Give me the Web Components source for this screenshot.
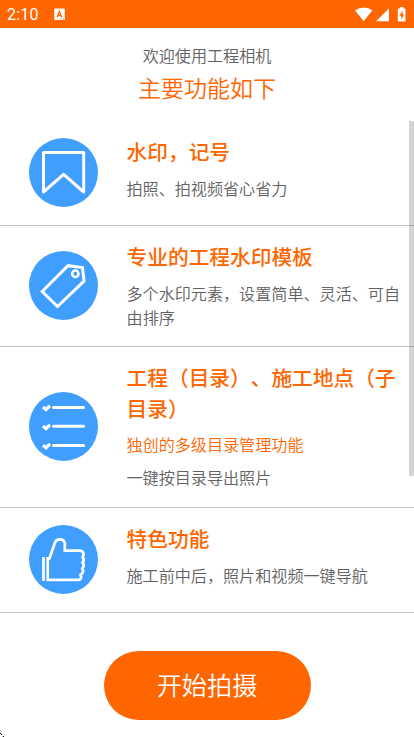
<!DOCTYPE html>
<html lang="zh-CN">
<head>
<meta charset="utf-8">
<title>工程相机</title>
<style>
html,body{margin:0;height:100%;overflow:hidden;background:#fff}
body{font-family:"Noto Sans CJK SC",sans-serif;font-weight:350;color:#606266;text-spacing-trim:space-all}
</style>
</head>
<body>
<welcome-page></welcome-page>
<script>
const define = (name, html) => {
  const template = document.createElement('template');
  template.innerHTML = html;
  customElements.define(name, class extends HTMLElement {
    constructor() {
      super();
      this.attachShadow({ mode: 'open' }).append(template.content.cloneNode(true));
    }
  });
};

define('status-bar', `
<style>
:host{display:flex;height:28px;background:#f60;color:#fff;align-items:center;box-sizing:border-box;padding:1px 8px 0 7px;font:16px/27px Roboto,sans-serif}
.time{flex:none;width:47px;letter-spacing:.25px}
svg{display:block;flex:none}
.right{margin-left:auto;display:flex;align-items:center}
</style>
<span class="time">2:10</span>
<svg width="12" height="13" viewBox="0 0 12 13"><path fill="#fff" d="M1 0.5h9q.8 0 .8.8v10q0 .8-.8.8H1q-.8 0-.8-.8v-10Q.2.5 1 .5Z"/><path d="M3.1 9.3 5.4 3.6 7.7 9.3M3.8 7.6h3.4" fill="none" stroke="#f60" stroke-width="1.4"/><path d="M6.5 11h1.2M8.8 11h1.2" stroke="#f60"/></svg>
<span class="right">
<svg width="51" height="18" viewBox="0 0 51 18"><g fill="#fff"><path d="M0 4.3Q8.7-1.5 17.5 4.3L8.7 15.3Z"/><path d="M34 2.3v13H21Z"/><path d="M44.8 1h3.6v1.6h1.4q.7 0 .7.7v11.5q0 .7-.7.7h-6.3q-.7 0-.7-.7V3.3q0-.7.7-.7h1.3Z"/></g><path fill="#f60" d="M47.5 4.5 44.4 9.7h1.8v4l3-5.4h-1.7Z"/></svg>
</span>`);

define('page-heading', `
<style>
:host{display:block;height:92.5px;box-sizing:border-box;padding-top:15px;text-align:center}
.sub{font-size:16.1px;line-height:24px}
.main{font-size:23px;line-height:34px;color:#f60;margin-top:3px}
</style>
<div class="sub"><slot name="sub"></slot></div>
<div class="main"><slot></slot></div>`);

define('round-icon', `
<style>
:host{display:block;width:69px;height:69px;border-radius:50%;background:#409eff;flex:none}
::slotted(svg){display:block;width:69px;height:69px}
</style><slot></slot>`);

define('feature-row', `
<style>
:host{display:grid;grid-template-columns:69px 276px;column-gap:28.8px;padding:15px 0 0 28.8px;border-bottom:1.15px solid #c4c4c4;box-sizing:border-box}
.icon{align-self:center;padding-bottom:16px}
.title{font-size:20.7px;line-height:31px;font-weight:500;color:#f60}
::slotted(p){margin:9px 0 0;font-size:16.1px;line-height:24px;text-indent:-.15px}
::slotted(.accent){color:#f60;margin:8.4px 0 9.6px}
</style>
<div class="icon"><slot name="icon"></slot></div>
<div><div class="title"><slot name="title"></slot></div><slot></slot></div>`);

define('start-button', `
<style>
:host{display:block;width:207px;margin:38.3px 0 0 103.5px}
button{display:block;width:100%;height:69px;padding:0 0 2px;border:0;border-radius:34.5px;background:#f60;color:#fff;font:350 25.2px/67px "Noto Sans CJK SC",sans-serif}
</style><button><slot></slot></button>`);

define('welcome-page', `
<style>
:host{display:block;position:relative;width:414px;height:737px;overflow:hidden;background:#fff}
.r1,.r4{height:105px}.r2{height:121px}.r3{height:161px}
.thumb{position:absolute;right:0;top:121px;width:5px;height:355px;background:rgba(0,0,0,.17)}
.mark{position:absolute;left:0;bottom:0}
svg{fill:none;stroke:#fff;stroke-width:3}
</style>
<status-bar></status-bar>
<page-heading><span slot="sub">欢迎使用工程相机</span>主要功能如下</page-heading>
<feature-row class="r1"><round-icon slot="icon"><svg viewBox="0 0 69 69"><path stroke-linejoin="round" d="M14.5 14.5H54.7V54L34.6 36.3 14.5 54Z"/></svg></round-icon><span slot="title">水印，记号</span><p>拍照、拍视频省心省力</p></feature-row>
<feature-row class="r2"><round-icon slot="icon"><svg viewBox="0 0 69 69"><path d="M13.2 40.5 39 14.7 53.5 16.5 55 30.2 28.5 55.5Z"/><circle cx="46.3" cy="22.8" r="3.2" stroke-width="2.5"/></svg></round-icon><span slot="title">专业的工程水印模板</span><p>多个水印元素，设置简单、灵活、可自由排序</p></feature-row>
<feature-row class="r3"><round-icon slot="icon"><svg viewBox="0 0 69 69"><path stroke-linecap="round" d="M24.5 15.5h30M24.5 34.2h30M24.5 53.5h30"/><path stroke-width="3.3" d="m14 15 3 2.5 4-3.8M14 34l3 2.5 4-3.8M14 53.2l3 2.5 4-3.8"/></svg></round-icon><span slot="title">工程（目录）、施工地点（子目录）</span><p class="accent">独创的多级目录管理功能</p><p>一键按目录导出照片</p></feature-row>
<feature-row class="r4"><round-icon slot="icon"><svg viewBox="0 0 69 69"><path d="M14.5 32v24" stroke-width="2.7"/><path stroke-width="2.7" d="M18.7 32v22.8h31.5q3.2-1.4 1.3-4.9 4-2.8 1.8-6.4 2.8-3.2.2-6 2.5-3.1.1-5.3Q56.3 26.5 51 25.7H35.8V18Q35 14.4 30.8 14.4 27 14.6 25.8 18L20.5 33.4H18.7"/></svg></round-icon><span slot="title">特色功能</span><p>施工前中后，照片和视频一键导航</p></feature-row>
<start-button>开始拍摄</start-button>
<div class="thumb"></div>
<svg class="mark" width="4" height="4" viewBox="0 0 4 4" style="stroke:#111;stroke-width:1"><path d="M0 .5h1.2M1 1.5h1M2.8 3.5H4"/></svg>`);
</script>
</body>
</html>
